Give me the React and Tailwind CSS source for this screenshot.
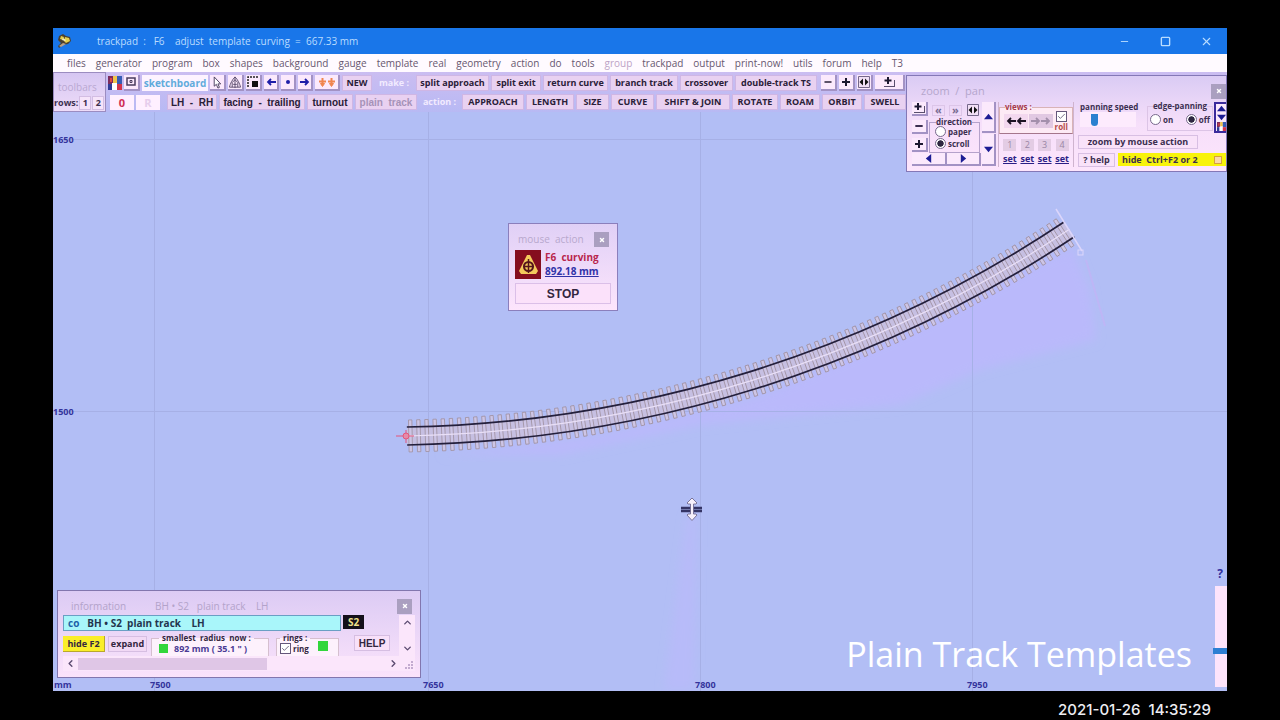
import React from 'react';
import { Check, ChevronDown, ChevronLeft, ChevronRight, ChevronUp, Minus, Square, X } from 'lucide-react';

const menuItems = [
  'files', 'generator', 'program', 'box', 'shapes', 'background', 'gauge', 'template', 'real', 'geometry',
  'action', 'do', 'tools', 'group', 'trackpad', 'output', 'print-now!', 'utils', 'forum', 'help', 'T3',
];

const makeButtons = [
  { label: 'split approach', width: 'w-[73px]' },
  { label: 'split exit', width: 'w-[50px]' },
  { label: 'return curve', width: 'w-[65px]' },
  { label: 'branch track', width: 'w-[68px]' },
  { label: 'crossover', width: 'w-[53px]' },
  { label: 'double-track TS', width: 'w-[82px]' },
];

const actionButtons = [
  { label: 'APPROACH', width: 'w-[62px]' },
  { label: 'LENGTH', width: 'w-[48px]' },
  { label: 'SIZE', width: 'w-[33px]' },
  { label: 'CURVE', width: 'w-[43px]' },
  { label: 'SHIFT & JOIN', width: 'w-[74px]' },
  { label: 'ROTATE', width: 'w-[46px]' },
  { label: 'ROAM', width: 'w-[40px]' },
  { label: 'ORBIT', width: 'w-[40px]' },
  { label: 'SWELL', width: 'w-[42px]' },
];

// template centre line: a circular arc starting at the peg
const PEG = { x: 407, y: 436 };
const RADIUS = 1234;
const SWING = 0.57;

const pointAt = (angle, offset) => ({
  x: PEG.x + (RADIUS + offset) * Math.sin(angle),
  y: PEG.y - RADIUS + (RADIUS + offset) * Math.cos(angle),
});

const arcPath = (offset) => {
  const start = pointAt(0, offset);
  const end = pointAt(SWING, offset);
  const r = RADIUS + offset;
  return `M${start.x} ${start.y} A${r} ${r} 0 0 0 ${end.x} ${end.y}`;
};

const timbers = Array.from({ length: 85 }, (_, i) => (3.5 + i * 8.25) / RADIUS);

const TrackCanvas = () => (
  <svg
    viewBox="53 72 1174 619"
    preserveAspectRatio="xMinYMin slice"
    className="absolute inset-0 h-full w-full"
    fill="none"
  >
    <defs>
      <filter id="soft" x="-10%" y="-10%" width="120%" height="120%">
        <feGaussianBlur stdDeviation="5" />
      </filter>
    </defs>
    <g fill="#bab9fb" filter="url(#soft)">
      <path d="M440 455L600 435L760 395L920 325L1072 245L1090 290L1096 340L980 370L900 405L700 425L560 455Z" />
      <path d="M687 515H697L694 691H664Z" fillOpacity="0.6" />
    </g>
    <path d="M154.500 112V691M428.500 112V691M700.500 112V691M972.500 112V691" stroke="#a6b0e6" />
    <path d="M53 139.500H1227M53 411.500H1227" stroke="#a6b0e6" />

    <g transform={`rotate(-1 ${PEG.x} ${PEG.y})`}>
      <path d={arcPath(0)} stroke="#c6bfe2" strokeWidth="20" />
      {timbers.map((angle) => {
        const p = pointAt(angle, 0);
        return (
          <rect
            key={angle}
            x={p.x - 1.7}
            y={p.y - 16}
            width="3.4"
            height="32"
            stroke="#9f909f"
            strokeWidth="0.8"
            fill="#cdc5e6"
            transform={`rotate(${(-angle * 180) / Math.PI} ${p.x} ${p.y})`}
          />
        );
      })}
      <path d={arcPath(0)} stroke="#e9dff6" strokeWidth="1.2" />
      <path d={arcPath(-9)} stroke="#231f3c" strokeWidth="1.7" />
      <path d={arcPath(9)} stroke="#231f3c" strokeWidth="1.7" />
    </g>

    <path d="M1056 209L1082 251" stroke="#dcd6fb" strokeWidth="1.5" />
    <rect x="1078" y="250" width="5" height="5" stroke="#dcd6fb" />
    <path d="M1086 260L1105 326" stroke="#beb6f6" strokeWidth="2" />

    {/* fixing peg */}
    <path d="M396 436H414M406 430V443" stroke="#e4557a" />
    <circle cx="406" cy="436" r="3" stroke="#e4557a" fill="#e58aa8" />

    {/* mouse pointer */}
    <path d="M681 508H702M681 511H702" stroke="#343465" strokeWidth="2.4" />
    <path
      d="M692 498L697 503L696 504H693.500V514H696L697 515L692 520.500L687 515L688 514H690.500V504H688L687 503Z"
      fill="#f6f0fb"
      stroke="#6f6a90"
      strokeWidth="0.9"
    />

    <g fill="#34349c" fontFamily="Open Sans, sans-serif" fontSize="9" fontWeight="700">
      <text x="53" y="143">1650</text>
      <text x="53" y="415">1500</text>
      <text x="54" y="688">mm</text>
      <text x="150" y="688">7500</text>
      <text x="423" y="688">7650</text>
      <text x="695" y="688">7800</text>
      <text x="967" y="688">7950</text>
    </g>
  </svg>
);

const AppIcon = () => (
  <svg viewBox="0 0 16 16" className="h-4 w-4">
    <path d="M2 3l4-2 3 2 4 1 1 4-3 3-5 1-4 3-1-2 3-3-3-3z" fill="#4a4030" />
    <path d="M4 3l3 1-1 3-3-1zM8 4l4 1 1 3-4 2-2-2z" fill="#e5cf4d" />
    <path d="M2 13l4-3 3 1-5 3z" fill="#b5a08b" />
    <path d="M6 5l3 2-1 1-3-1z" fill="#f5f0c0" />
  </svg>
);

const ColourIcon = ({ className = 'h-[14px] w-[14px]' }) => (
  <svg viewBox="0 0 14 14" className={className}>
    <path d="M0 0h5v8H0z" fill="#7d2b5c" />
    <path d="M5 0h4v7H5z" fill="#f0c54a" />
    <path d="M9 0h5v8H9z" fill="#375cb4" />
    <path d="M0 8h4v6H0z" fill="#303a96" />
    <path d="M4 7h5v7H4z" fill="#fff" />
    <path d="M9 8h5v6H9z" fill="#d4344b" />
    <path d="M2 2h2v4H2z" fill="#e0483f" />
  </svg>
);

const SplitIcon = () => (
  <svg viewBox="0 0 14 12" className="h-3 w-[14px]">
    <path d="M1.500 .5h11v11h-11z" fill="#f1dff5" stroke="#75688a" />
    <path d="M6 2.500v7L2.500 6zM8 2.500v7L11.500 6z" fill="#111" />
  </svg>
);

const PlusIcon = () => (
  <svg viewBox="0 0 10 10" className="h-[10px] w-[10px]" stroke="#1c1830" strokeWidth="2">
    <path d="M5 1v8M1 5h8" />
  </svg>
);

const PlusCornerIcon = () => (
  <svg viewBox="0 0 14 12" className="h-3 w-[14px]" fill="none" stroke="#1c1830">
    <path d="M6 1v7M2.500 4.500h7" strokeWidth="2" />
    <path d="M2 10.500h10M12.500 4v7" stroke="#5a4f6e" />
  </svg>
);

const Arrow = ({ left, color = '#1f1fa8' }) => (
  <svg viewBox="0 0 10 8" className="h-2 w-[10px]" fill="none" stroke={color} strokeWidth="1.8">
    <path d={left ? 'M10 4H2M5 1L2 4l3 3' : 'M0 4h8M5 1l3 3-3 3'} />
  </svg>
);

const Tri = ({ dir }) => {
  const shapes = {
    up: 'M0 8l5-6 5 6z',
    down: 'M0 2l5 6 5-6z',
    left: 'M8 0v10L2 5z',
    right: 'M2 0v10l6-5z',
  };
  return (
    <svg viewBox="0 0 10 10" className="h-[9px] w-[9px]">
      <path d={shapes[dir]} fill="#1c1c94" />
    </svg>
  );
};

const ToolButton = ({ width, className = '', children, ...rest }) => (
  <button
    className={`flex h-4 shrink-0 items-center justify-center whitespace-pre border border-[#cfb6e4] bg-[#e9d1f1] ${width} ${className}`}
    {...rest}
  >
    {children}
  </button>
);

const RaisedButton = ({ width, height = 'h-4', children, ...rest }) => (
  <button
    className={`flex shrink-0 items-center justify-center border-r-2 border-b-2 border-[#a392c4] bg-[#fbe9fc] ${width} ${height}`}
    {...rest}
  >
    {children}
  </button>
);

const CloseButton = () => (
  <button aria-label="close" className="flex h-[15px] w-[15px] items-center justify-center bg-[#aa9fc0] text-white">
    <X size={6} strokeWidth={6} />
  </button>
);

const TitleBar = () => (
  <header className="flex h-[26px] shrink-0 items-center bg-[#1976e9] text-[#b9dcff]">
    <div className="flex w-11 pl-1">
      <AppIcon />
    </div>
    <h1 className="flex-1 pt-px text-[10px] whitespace-pre">trackpad  :   F6    adjust  template  curving  =  667.33 mm</h1>
    <div className="flex">
      <button aria-label="minimize" className="flex w-[41px] items-center justify-center"><Minus size={11} strokeWidth={2} /></button>
      <button aria-label="maximize" className="flex w-[41px] items-center justify-center"><Square size={11} strokeWidth={3} /></button>
      <button aria-label="close window" className="flex w-[41px] items-center justify-center"><X size={13} strokeWidth={2} /></button>
    </div>
  </header>
);

const MenuBar = () => (
  <nav className="flex h-[18px] shrink-0 items-center gap-[10px] bg-[#fffaff] pl-[14px] text-[10px] text-[#67576f]">
    {menuItems.map((item) => (
      <button key={item} className={item === 'group' ? 'text-[#bda3c6]' : ''}>
        {item}
      </button>
    ))}
  </nav>
);

const Toolbars = () => (
  <div className="relative flex h-10 items-start bg-linear-to-b from-[#cbbdf1] to-[#b8b9f4]">
    <section className="flex h-10 w-[53px] shrink-0 flex-col justify-between border border-[#9b8cc0] bg-linear-to-b from-[#d6c6f2] to-[#eedcf8] pt-[6px] pb-px">
      <p className="pl-1 text-[10px] leading-[16px] text-[#b9a8d2]">toolbars</p>
      <div className="flex items-center gap-px text-[9px] font-bold text-[#3d3050]">
        <span>rows:</span>
        <button className="h-[14px] w-3 border border-[#d3bde3] bg-[#f6e4fa] leading-[12px]">1</button>
        <button className="h-[14px] w-3 border border-[#d3bde3] bg-[#f6e4fa] leading-[12px]">2</button>
      </div>
    </section>
    <div className="flex flex-col gap-[3px] pt-[3px] pl-[2px] text-[9px] font-bold text-[#2a2038]">
      <div className="flex h-4 items-center gap-[2px]">
        <button aria-label="colours"><ColourIcon /></button>
        <RaisedButton width="w-4" aria-label="box">
          <svg viewBox="0 0 10 10" className="h-[10px] w-[10px]" fill="none" stroke="#4a3c5e">
            <path d="M1 1h8v7H1z" strokeWidth="1.5" />
            <path d="M4 3.500h2v2H4z" />
          </svg>
        </RaisedButton>
        <button className="h-4 w-[66px] bg-[#fdf3ff] text-[10px] leading-[14px] text-[#62abdc]">sketchboard</button>
        <RaisedButton width="w-4" aria-label="select">
          <svg viewBox="0 0 10 14" className="h-[13px] w-[10px]" fill="#fff" stroke="#483c5c">
            <path d="M2 1v10l2.300-2L6 13l1.600-.8L6 8.500h3z" />
          </svg>
        </RaisedButton>
        <RaisedButton width="w-4" aria-label="measure">
          <svg viewBox="0 0 14 14" className="h-[13px] w-[14px]" fill="none" stroke="#584a6b">
            <path d="M7 1C4 4 2 8 1 12h12C12 8 10 4 7 1zM7 1v12M4 12V7l3-3 3 3v5M5 9h4" />
          </svg>
        </RaisedButton>
        <RaisedButton width="w-4" aria-label="marquee">
          <svg viewBox="0 0 12 12" className="h-3 w-3">
            <path d="M1 11V1h10" fill="none" stroke="#222" strokeWidth="1.5" strokeDasharray="2 1" />
            <path d="M5 5h6v6H5z" fill="#111" />
          </svg>
        </RaisedButton>
        <RaisedButton width="w-[15px]" aria-label="previous"><Arrow left /></RaisedButton>
        <RaisedButton width="w-[15px]" aria-label="centre">
          <span className="h-1 w-1 rounded-full bg-[#1f1fa8]" />
        </RaisedButton>
        <RaisedButton width="w-[15px]" aria-label="next"><Arrow /></RaisedButton>
        <RaisedButton width="w-[25px]" aria-label="drop pins">
          <svg viewBox="0 0 18 10" className="h-[10px] w-[18px]" fill="#f0854f" stroke="#f0854f">
            <path d="M4.500 1v7M1 4.500h7M13.500 1v7M10 4.500h7" strokeWidth="2" />
            <path d="M2.500 6.500h4l-2 3zM11.500 6.500h4l-2 3z" />
          </svg>
        </RaisedButton>
        <ToolButton width="w-[30px]">NEW</ToolButton>
        <span className="w-10 text-center text-[#f2ebff]">make :</span>
        {makeButtons.map((b) => (
          <ToolButton key={b.label} width={b.width}>{b.label}</ToolButton>
        ))}
        <div className="flex gap-[2px] pl-[2px]">
          <RaisedButton width="w-4" aria-label="less"><Minus size={10} strokeWidth={4} /></RaisedButton>
          <RaisedButton width="w-4" aria-label="more"><PlusIcon /></RaisedButton>
          <RaisedButton width="w-4" aria-label="split"><SplitIcon /></RaisedButton>
        </div>
        <RaisedButton width="w-[30px]" aria-label="add"><PlusCornerIcon /></RaisedButton>
      </div>
      <div className="flex h-4 items-center gap-[2px]">
        <div className="flex w-[57px] gap-[2px] pl-[2px] text-[11px]">
          <button className="h-[15px] w-6 bg-[#fff0ff] leading-[15px] text-[#cf2f57]">0</button>
          <button className="h-[15px] w-6 bg-[#fff0ff] leading-[15px] text-[#e6cdec]">R</button>
        </div>
        <ToolButton width="w-[50px]" className="font-[Liberation_Sans] text-[10px]">LH  -  RH</ToolButton>
        <ToolButton width="w-[86px]" className="font-[Liberation_Sans] text-[10px]">facing  -  trailing</ToolButton>
        <ToolButton width="w-[46px]" className="font-[Liberation_Sans] text-[10px]">turnout</ToolButton>
        <ToolButton width="w-[62px]" className="font-[Liberation_Sans] text-[10px] text-[#a693b8]">plain  track</ToolButton>
        <span className="w-[41px] text-center text-[#f2ebff]">action :</span>
        {actionButtons.map((b) => (
          <ToolButton key={b.label} width={b.width}>{b.label}</ToolButton>
        ))}
      </div>
    </div>
  </div>
);

const Radio = ({ name, label, checked }) => (
  <label className="flex items-center gap-[2px]">
    <input
      type="radio"
      name={name}
      defaultChecked={checked}
      className="h-[11px] w-[11px] appearance-none rounded-full border border-[#77698c] bg-white checked:bg-[radial-gradient(#2e2740_45%,#fff_55%)]"
    />
    {label}
  </label>
);

const TickBox = ({ label }) => (
  <span className="relative flex h-[11px] w-[11px] shrink-0">
    <input
      type="checkbox"
      aria-label={label}
      defaultChecked
      className="peer h-[11px] w-[11px] appearance-none border border-[#65577b] bg-white"
    />
    <Check size={9} strokeWidth={2} className="pointer-events-none absolute top-px left-px hidden text-[#4b4060] peer-checked:block" />
  </span>
);

const ZoomPanel = () => (
  <section className="absolute top-[3px] right-0 flex h-[97px] w-[321px] flex-col border border-[#8478b6] bg-linear-to-b from-[#dacbf4] via-[#f6dffa] to-[#fde5fc] text-[9px] leading-[10px] text-[#3b2f50]">
    <div className="flex h-[26px] shrink-0 items-center justify-between pt-1 pl-[14px]">
      <h2 className="text-[11px] whitespace-pre text-[#b5a6cc]">zoom  /  pan</h2>
      <CloseButton />
    </div>
    <div className="flex pl-[5px]">
      <div className="flex w-[70px] flex-col">
        <div className="flex h-[51px]">
          <div className="flex w-[17px] flex-col gap-1">
            <RaisedButton width="w-4" height="h-[14px]" aria-label="zoom in corner"><PlusCornerIcon /></RaisedButton>
            <RaisedButton width="w-4" height="h-[14px]" aria-label="zoom out"><Minus size={10} strokeWidth={5} /></RaisedButton>
            <RaisedButton width="w-4" height="h-[14px]" aria-label="zoom in"><PlusIcon /></RaisedButton>
          </div>
          <div className="flex flex-1 flex-col">
            <div className="flex h-4 items-center justify-between pr-[2px] pl-[3px] text-[11px] font-bold text-[#7a6c92]">
              <button className="h-[11px] w-[13px] border border-[#dcc5e8] leading-[8px]">«</button>
              <button className="h-[11px] w-[13px] border border-[#dcc5e8] leading-[8px]">»</button>
              <button aria-label="fit"><SplitIcon /></button>
            </div>
            <fieldset className="mr-[2px] flex-1 border border-[#b5a2cb] pl-[5px]">
              <legend className="ml-px text-[8px] leading-[8px] font-bold">direction</legend>
              <div className="flex flex-col gap-px text-[8px] font-bold">
                <Radio name="direction" label="paper" />
                <Radio name="direction" label="scroll" checked />
              </div>
            </fieldset>
          </div>
        </div>
        <div className="flex">
          <RaisedButton width="w-[35px]" height="h-[13px]" aria-label="pan left"><Tri dir="left" /></RaisedButton>
          <RaisedButton width="w-[34px]" height="h-[13px]" aria-label="pan right"><Tri dir="right" /></RaisedButton>
        </div>
      </div>
      <div className="flex w-4 flex-col gap-px">
        <RaisedButton width="w-[14px]" height="h-[31px]" aria-label="pan up"><Tri dir="up" /></RaisedButton>
        <RaisedButton width="w-[14px]" height="h-[32px]" aria-label="pan down"><Tri dir="down" /></RaisedButton>
      </div>
      <div className="flex w-[76px] flex-col border-x border-[#cfb4cf]">
        <fieldset className="h-[32px] border border-[#d9b3b6] border-b-[#a5768c] bg-[#fdeaf5] px-1">
          <legend className="ml-px text-[8px] leading-[10px] font-bold text-[#a53b4b]">views :</legend>
          <div className="flex items-start justify-between pt-[2px]">
            <button aria-label="view back" className="flex h-[14px] w-6 items-center justify-center bg-[#f3d8ef]"><Arrow left color="#1c1424" /><Arrow left color="#1c1424" /></button>
            <button aria-label="view forward" className="flex h-[14px] w-6 items-center justify-center bg-[#e1c8e2]"><Arrow color="#a38fab" /><Arrow color="#a38fab" /></button>
            <div className="-mt-[3px] flex flex-col items-center text-[8px] leading-[9px] font-bold text-[#b54a4a]">
              <TickBox label="roll" />
              roll
            </div>
          </div>
        </fieldset>
        <div className="flex justify-between px-1 pt-[5px]">
          {[1, 2, 3, 4].map((n) => (
            <div key={n} className="flex flex-col items-center gap-[3px]">
              <button className="h-3 w-[13px] bg-[#e3cce4] leading-[12px] text-[#9a86a5]">{n}</button>
              <a href="#set" className="font-bold text-[#2b1f86] underline">set</a>
            </div>
          ))}
        </div>
      </div>
      <div className="flex flex-1 flex-col gap-1 pl-1">
        <div className="flex h-[29px] justify-between">
          <label className="flex flex-col pl-[2px] text-[8px] font-bold">
            panning speed
            <input
              type="range"
              defaultValue={22}
              className="h-[15px] w-14 appearance-none bg-[#fdebfd] [&::-webkit-slider-thumb]:h-3 [&::-webkit-slider-thumb]:w-[7px] [&::-webkit-slider-thumb]:appearance-none [&::-webkit-slider-thumb]:rounded-b-full [&::-webkit-slider-thumb]:bg-[#2a80d0]"
            />
          </label>
          <div className="flex gap-px">
            <fieldset className="w-[66px] border border-[#dcc4e6] px-[2px] text-[8px] font-bold">
              <legend className="mx-auto text-[8px] leading-[8px] whitespace-nowrap">edge-panning</legend>
              <div className="flex justify-between pt-1">
                <Radio name="edge" label="on" />
                <Radio name="edge" label="off" checked />
              </div>
            </fieldset>
            <div className="flex h-[31px] w-3 flex-col items-center justify-between border-2 border-r-0 border-[#3a2a9c] bg-[#fbe9fc]">
              <button aria-label="up"><Tri dir="up" /></button>
              <button aria-label="down"><Tri dir="down" /></button>
              <button aria-label="palette"><ColourIcon className="h-[9px] w-[9px]" /></button>
            </div>
          </div>
        </div>
        <button className="h-[14px] w-[120px] border border-[#d8bfe3] bg-[#f9e2f9] leading-[12px] font-bold whitespace-pre">zoom by mouse action</button>
        <div className="flex justify-between">
          <button className="h-[14px] w-[37px] border border-[#d8bfe3] bg-[#f9e2f9] leading-[12px] font-bold">? help</button>
          <button className="flex h-[13px] w-[108px] items-center justify-between bg-[#f8f30b] px-1 font-bold whitespace-pre">
            hide  Ctrl+F2 or 2
            <span className="h-2 w-2 border border-[#d8a03c] bg-[#fbd9a8]" />
          </button>
        </div>
      </div>
    </div>
  </section>
);

const MouseActionPanel = () => (
  <section className="absolute top-[151px] left-[455px] w-[110px] border border-[#8b7fbc] bg-linear-to-b from-[#e0d0f6] to-[#fde5fc] px-[6px] pt-2 pb-[6px]">
    <div className="flex items-center justify-between pr-[2px] pl-[3px]">
      <h2 className="text-[10px] leading-[15px] whitespace-pre text-[#b8a8cd]">mouse  action</h2>
      <CloseButton />
    </div>
    <div className="flex gap-1 pt-[3px]">
      <svg viewBox="0 0 26 29" className="h-[29px] w-[26px]">
        <path d="M0 0h26v29H0z" fill="#850d1e" />
        <path d="M12 5h3l8 16-2 3H6l-2-3z" fill="#f3c95c" />
        <circle cx="13.500" cy="16.500" r="4.500" fill="none" stroke="#55141b" strokeWidth="2" />
        <path d="M13.500 9v14M8 16.500h11" stroke="#55141b" strokeWidth="1.5" />
      </svg>
      <div className="text-[10px] leading-[14px] font-bold whitespace-pre">
        <p className="text-[#b8264c]">F6  curving</p>
        <a href="#dimension" className="text-[#3133a8] underline">892.18 mm</a>
      </div>
    </div>
    <button className="mt-1 h-[21px] w-full border border-[#dbbfe8] bg-[#fbe1fa] font-[Liberation_Sans] text-xs font-bold text-[#33263f]">
      STOP
    </button>
  </section>
);

const InfoPanel = () => (
  <section className="absolute bottom-[13px] left-1 w-[364px] border border-[#8276ae] bg-linear-to-b from-[#dccbf4] to-[#fbe3fb] px-[5px] pt-[7px] pb-[6px] text-[9px] text-[#33263f]">
    <div className="flex items-center justify-between pr-[3px] pl-2 text-[10px] leading-[16px] whitespace-pre text-[#b3a3ca]">
      <div className="flex">
        <h2 className="w-[84px]">information</h2>
        <p>BH • S2   plain track    LH</p>
      </div>
      <CloseButton />
    </div>
    <div className="flex pt-px">
      <div className="w-[336px]">
        <div className="flex items-start gap-[2px]">
          <p className="flex h-4 w-[278px] items-center gap-2 border border-[#6a9fc4] bg-[#a9f6fa] pl-1 text-[10px] font-bold whitespace-pre text-[#23344d]">
            <span className="text-[#1d60a8]">co</span>
            BH • S2  plain track    LH
          </p>
          <span className="h-[14px] w-[21px] bg-[#14101a] text-center text-[10px] leading-[14px] font-bold text-[#eee08a]">S2</span>
        </div>
        <div className="flex h-[25px] items-start pt-1 font-bold">
          <button className="mt-px h-4 w-[42px] border-r border-b border-[#b9a82c] bg-[#faee2a]">hide F2</button>
          <button className="mt-px ml-[3px] h-4 w-[39px] border border-[#d6bee2] bg-[#f1d9f5]">expand</button>
          <fieldset className="ml-1 h-[21px] w-[118px] border border-b-0 border-[#d6bfcf] bg-[#fdf1fc] pl-[7px]">
            <legend className="px-[3px] text-[8px] leading-[6px] whitespace-pre">smallest  radius  now :</legend>
            <div className="flex items-center gap-[6px] leading-[15px] text-[#4a3a94]">
              <span className="h-[9px] w-[9px] bg-[#32d63c]" />
              892 mm ( 35.1 " )
            </div>
          </fieldset>
          <fieldset className="ml-[7px] h-[21px] w-[63px] border border-b-0 border-[#d6bfcf] bg-[#fdf1fc] pl-[3px]">
            <legend className="px-[3px] text-[8px] leading-[6px]">rings :</legend>
            <div className="flex items-start justify-between pr-[10px]">
              <label className="flex items-center gap-[2px] text-[8px] leading-[15px]">
                <TickBox label="ring" />
                ring
              </label>
              <span className="h-[10px] w-[10px] bg-[#32d63c]" />
            </div>
          </fieldset>
          <button className="ml-[15px] h-4 w-9 border border-[#d6bee2] bg-[#f8e0f9] font-[Liberation_Sans] text-[10px]">HELP</button>
        </div>
      </div>
      <div className="flex flex-1 flex-col items-center justify-between bg-[#fbe6fb] py-[2px] text-[#5b4b70]">
        <button aria-label="scroll up"><ChevronUp size={11} strokeWidth={3} /></button>
        <button aria-label="scroll down"><ChevronDown size={11} strokeWidth={3} /></button>
      </div>
    </div>
    <div className="flex h-[15px] items-center bg-[#fbe6fb] text-[#5b4b70]">
      <button aria-label="scroll left" className="flex w-[15px] justify-center"><ChevronLeft size={11} strokeWidth={3} /></button>
      <div className="flex-1">
        <div className="h-3 w-[189px] bg-[#dfc6e6]" />
      </div>
      <button aria-label="scroll right" className="flex w-4 justify-center"><ChevronRight size={11} strokeWidth={3} /></button>
      <svg viewBox="0 0 14 14" className="h-[14px] w-[14px] self-end" fill="#c3abd0">
        <path d="M10 4h2v2h-2zM10 7h2v2h-2zM10 10h2v2h-2zM7 7h2v2H7zM7 10h2v2H7zM4 10h2v2H4z" />
      </svg>
    </div>
  </section>
);

const App = () => {
  return (
    <div className="flex h-screen flex-col bg-black px-[53px] pt-7 font-[Open_Sans,sans-serif]">
      <TitleBar />
      <MenuBar />
      <main className="relative min-h-0 flex-1 overflow-hidden bg-[#b2bef5]">
        <TrackCanvas />
        <Toolbars />
        <ZoomPanel />
        <MouseActionPanel />
        <InfoPanel />
        <p className="absolute right-[35px] bottom-3 text-[34px] leading-[50px] text-white">Plain Track Templates</p>
        <div className="absolute right-0 bottom-1 flex w-[14px] flex-col items-center gap-1">
          <button className="text-[12px] leading-[16px] font-bold text-[#3330a0]">?</button>
          <input
            type="range"
            aria-label="zoom"
            defaultValue={65}
            className="h-[101px] w-[14px] appearance-none bg-linear-to-r from-transparent from-15% via-[#fde4fb] via-15% to-[#fde4fb] [writing-mode:vertical-lr] [&::-webkit-slider-thumb]:h-[6px] [&::-webkit-slider-thumb]:w-[14px] [&::-webkit-slider-thumb]:appearance-none [&::-webkit-slider-thumb]:bg-[#2d7fd3]"
          />
        </div>
      </main>
      <footer className="flex h-[29px] shrink-0 items-center justify-end pt-[10px] pr-4 font-[Inter] text-[15px] font-medium text-[#ededf2]">
        <time className="whitespace-pre">2021-01-26  14:35:29</time>
      </footer>
    </div>
  );
};

export default App;
